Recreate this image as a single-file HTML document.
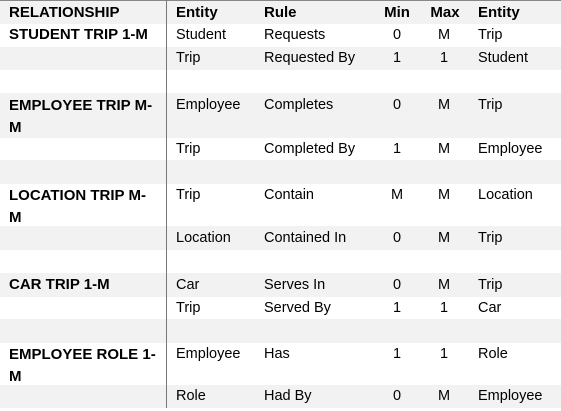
<!DOCTYPE html>
<html><head><style>
body{margin:0;width:561px;height:411px;background:#fff;position:relative;overflow:hidden;font-family:"Liberation Sans",Arial,sans-serif;font-size:14.5px;color:#000}
.r{position:absolute;left:0;width:561px}
.g{background:#f2f2f2}
.t{position:absolute;white-space:nowrap;line-height:20px}
.b{font-weight:bold;font-size:15px}
.c{text-align:center;width:30px}
</style></head><body>
<div style="position:absolute;left:0;top:0;width:561px;height:1px;background:#888"></div>
<div class="r g" style="top:1px;height:23px"></div>
<div class="r g" style="top:47px;height:23px"></div>
<div class="r g" style="top:93px;height:45px"></div>
<div class="r g" style="top:160px;height:24px"></div>
<div class="r g" style="top:226px;height:24px"></div>
<div class="r g" style="top:273px;height:24px"></div>
<div class="r g" style="top:319px;height:24px"></div>
<div class="r g" style="top:385px;height:23px"></div>
<div style="position:absolute;left:166px;top:0;width:1px;height:408px;background:#777"></div>

<div class="t b" style="left:9px;top:3px">RELATIONSHIP</div>
<div class="t b" style="left:176px;top:3px">Entity</div>
<div class="t b" style="left:264px;top:3px">Rule</div>
<div class="t b c" style="left:382px;top:3px">Min</div>
<div class="t b c" style="left:430px;top:3px">Max</div>
<div class="t b" style="left:478px;top:3px">Entity</div>

<div class="t b" style="left:9px;top:25px">STUDENT TRIP 1-M</div>
<div class="t" style="left:176px;top:25px">Student</div>
<div class="t" style="left:264px;top:25px">Requests</div>
<div class="t c" style="left:382px;top:25px">0</div>
<div class="t c" style="left:429px;top:25px">M</div>
<div class="t" style="left:478px;top:25px">Trip</div>

<div class="t" style="left:176px;top:48px">Trip</div>
<div class="t" style="left:264px;top:48px">Requested By</div>
<div class="t c" style="left:382px;top:48px">1</div>
<div class="t c" style="left:429px;top:48px">1</div>
<div class="t" style="left:478px;top:48px">Student</div>

<div class="t b" style="left:9px;top:95px;line-height:22px">EMPLOYEE TRIP M-<br>M</div>
<div class="t" style="left:176px;top:95px">Employee</div>
<div class="t" style="left:264px;top:95px">Completes</div>
<div class="t c" style="left:382px;top:95px">0</div>
<div class="t c" style="left:429px;top:95px">M</div>
<div class="t" style="left:478px;top:95px">Trip</div>

<div class="t" style="left:176px;top:139px">Trip</div>
<div class="t" style="left:264px;top:139px">Completed By</div>
<div class="t c" style="left:382px;top:139px">1</div>
<div class="t c" style="left:429px;top:139px">M</div>
<div class="t" style="left:478px;top:139px">Employee</div>

<div class="t b" style="left:9px;top:185px;line-height:22px">LOCATION TRIP M-<br>M</div>
<div class="t" style="left:176px;top:185px">Trip</div>
<div class="t" style="left:264px;top:185px">Contain</div>
<div class="t c" style="left:382px;top:185px">M</div>
<div class="t c" style="left:429px;top:185px">M</div>
<div class="t" style="left:478px;top:185px">Location</div>

<div class="t" style="left:176px;top:228px">Location</div>
<div class="t" style="left:264px;top:228px">Contained In</div>
<div class="t c" style="left:382px;top:228px">0</div>
<div class="t c" style="left:429px;top:228px">M</div>
<div class="t" style="left:478px;top:228px">Trip</div>

<div class="t b" style="left:9px;top:275px">CAR TRIP 1-M</div>
<div class="t" style="left:176px;top:275px">Car</div>
<div class="t" style="left:264px;top:275px">Serves In</div>
<div class="t c" style="left:382px;top:275px">0</div>
<div class="t c" style="left:429px;top:275px">M</div>
<div class="t" style="left:478px;top:275px">Trip</div>

<div class="t" style="left:176px;top:298px">Trip</div>
<div class="t" style="left:264px;top:298px">Served By</div>
<div class="t c" style="left:382px;top:298px">1</div>
<div class="t c" style="left:429px;top:298px">1</div>
<div class="t" style="left:478px;top:298px">Car</div>

<div class="t b" style="left:9px;top:344px;line-height:22px">EMPLOYEE ROLE 1-<br>M</div>
<div class="t" style="left:176px;top:344px">Employee</div>
<div class="t" style="left:264px;top:344px">Has</div>
<div class="t c" style="left:382px;top:344px">1</div>
<div class="t c" style="left:429px;top:344px">1</div>
<div class="t" style="left:478px;top:344px">Role</div>

<div class="t" style="left:176px;top:386px">Role</div>
<div class="t" style="left:264px;top:386px">Had By</div>
<div class="t c" style="left:382px;top:386px">0</div>
<div class="t c" style="left:429px;top:386px">M</div>
<div class="t" style="left:478px;top:386px">Employee</div>
</body></html>
